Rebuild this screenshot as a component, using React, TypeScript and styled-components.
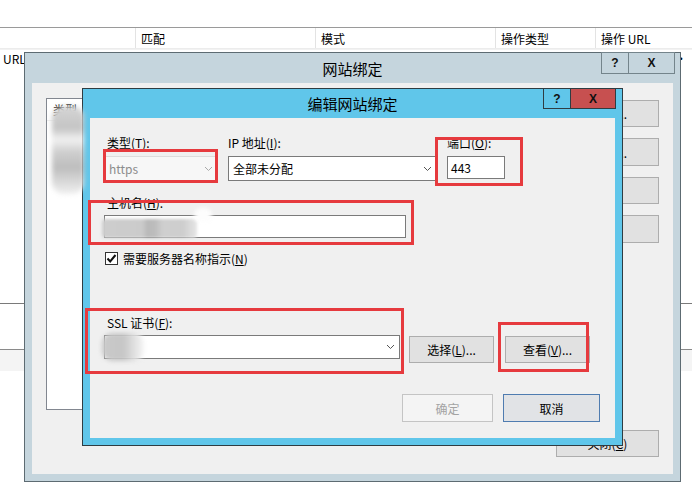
import React from 'react'
import styled, { createGlobalStyle, css } from 'styled-components'

const GlobalStyle = createGlobalStyle`
  html, body {
    margin: 0;
    padding: 0;
    background: #fff;
  }
  body {
    width: 692px;
    height: 488px;
    overflow: hidden;
    font-family: "Noto Sans CJK SC", "Noto Sans", sans-serif;
    font-size: 12px;
    color: #000;
  }
  u {
    text-decoration-thickness: 1px;
    text-underline-offset: 1px;
  }
`

const Screen = styled.div`
  position: relative;
  width: 692px;
  height: 488px;
  overflow: hidden;
  background: #fff;
`

/* the IIS list behind the dialogs */
const BackList = styled.div`
  padding-top: 27px;
`
const HeaderRow = styled.div`
  display: grid;
  grid-template-columns: 135px 180px 180px 100px 1fr;
  height: 20px;
  border-top: 1px solid #9a9a9a;
  border-bottom: 1px solid #ececec;
`
const HeaderCell = styled.div`
  display: flex;
  align-items: center;
  padding-left: 5px;
  border-left: 1px solid #e3e3e3;
  white-space: nowrap;
  &:first-child {
    border-left: none;
  }
`
const DataRow = styled.div`
  height: 16px;
  display: flex;
  align-items: center;
  justify-content: space-between;
  padding: 0 5px 0 3px;
  border-top: 1px solid #f2f2f2;
`
const GroupBlock = styled.div`
  margin-top: 237px;
  height: 45px;
  border-top: 1px solid #7a7a7a;
  border-bottom: 1px solid #8a8a8a;
`
const Band = styled.div`
  height: 21px;
  background: #f4f4f4;
`

/* window chrome */
const Win = styled.div<{ $x: number; $y: number; $w: number; $h: number; $frame: string; $edge: string }>`
  position: absolute;
  left: ${p => p.$x}px;
  top: ${p => p.$y}px;
  width: ${p => p.$w}px;
  height: ${p => p.$h}px;
  box-sizing: border-box;
  border: 1px solid ${p => p.$edge};
  background: ${p => p.$frame};
  display: flex;
  flex-direction: column;
`
const TitleBar = styled.div<{ $h: number }>`
  height: ${p => p.$h}px;
  flex-shrink: 0;
  display: grid;
  grid-template-columns: 1fr auto 1fr;
  align-items: center;
`
const Title = styled.div`
  grid-column: 2;
  font-size: 15px;
  color: #000;
  white-space: nowrap;
`
const Captions = styled.div<{ $inset: number }>`
  grid-column: 3;
  justify-self: end;
  align-self: start;
  display: flex;
  margin-top: -1px;
  margin-right: ${p => p.$inset}px;
`
const CaptionBtn = styled.div<{ $w: number; $h: number; $bg: string; $edge: string }>`
  box-sizing: border-box;
  width: ${p => p.$w}px;
  height: ${p => p.$h}px;
  background: ${p => p.$bg};
  border: 1px solid ${p => p.$edge};
  display: flex;
  align-items: center;
  justify-content: center;
  font: bold 12px "Liberation Sans", Arial, sans-serif;
  color: #111;
  & + & {
    border-left: none;
  }
`
const Client = styled.div`
  flex: 1;
  margin: 0 7px 7px;
  background: #f0f0f0;
  display: flex;
  flex-direction: column;
`

/* buttons */
const Btn = styled.button<{ $w: number; $h: number; $variant?: 'primary' | 'disabled' }>`
  box-sizing: border-box;
  width: ${p => p.$w}px;
  height: ${p => p.$h}px;
  flex-shrink: 0;
  padding: 0;
  font-family: inherit;
  font-size: 12px;
  color: #000;
  background: #e1e1e1;
  border: 1px solid #adadad;
  display: flex;
  align-items: center;
  justify-content: center;
  white-space: nowrap;
  ${p =>
    p.$variant === 'primary' &&
    css`
      border-color: #4f7cb0;
      background: #e1e3e6;
    `}
  ${p =>
    p.$variant === 'disabled' &&
    css`
      border-color: #c4c4c4;
      background: #f4f4f4;
      color: #a3a3a3;
    `}
`

/* outer dialog body */
const BindingsBody = styled.div`
  flex: 1;
  display: flex;
  flex-direction: column;
  padding: 15px 14px 17px;
`
const BindingsMain = styled.div`
  height: 312px;
  display: grid;
  grid-template-columns: 1fr 113px;
  column-gap: 13px;
`
const BindingList = styled.div`
  background: #fff;
  border: 1px solid #828790;
`
const ListHeader = styled.div`
  height: 21px;
  display: flex;
  align-items: center;
  padding-left: 6px;
  border-bottom: 1px solid #f0f0f0;
`
const SideButtons = styled.div`
  display: flex;
  flex-direction: column;
  gap: 11px;
  padding-top: 2px;
`
const FooterRow = styled.div`
  margin-top: 20px;
  display: flex;
  justify-content: flex-end;
`

/* edit dialog form */
const Form = styled.div`
  flex: 1;
  display: flex;
  flex-direction: column;
  padding: 17px 15px 16px 14px;
`
const TopGrid = styled.div`
  display: grid;
  grid-template-columns: 114px 209px 58px;
  column-gap: 10px;
  align-items: start;
`
const Field = styled.div<{ $gap?: number }>`
  display: flex;
  flex-direction: column;
  gap: ${p => p.$gap ?? 5}px;
`
const Section = styled(Field)<{ $top: number }>`
  margin-top: ${p => p.$top}px;
`
const Label = styled.div<{ $indent?: number }>`
  height: 16px;
  line-height: 16px;
  padding-left: ${p => p.$indent ?? 0}px;
  white-space: nowrap;
`
const Combo = styled.div<{ $w?: number; $h: number; $disabled?: boolean }>`
  box-sizing: border-box;
  width: ${p => (p.$w ? `${p.$w}px` : '100%')};
  height: ${p => p.$h}px;
  display: flex;
  align-items: center;
  justify-content: space-between;
  padding: 0 4px 0 4px;
  background: ${p => (p.$disabled ? '#f7f7f7' : '#fff')};
  border: 1px solid ${p => (p.$disabled ? '#dcdcdc' : '#7a7a7a')};
  color: ${p => (p.$disabled ? '#8c8c8c' : '#000')};
  flex-shrink: 0;
`
const TextBox = styled.div<{ $w?: number; $h: number }>`
  box-sizing: border-box;
  width: ${p => (p.$w ? `${p.$w}px` : '100%')};
  height: ${p => p.$h}px;
  display: flex;
  align-items: center;
  padding-left: 3px;
  background: #fff;
  border: 1px solid #7a7a7a;
`
const CheckRow = styled.div`
  margin-top: 12px;
  height: 16px;
  display: flex;
  align-items: center;
  gap: 5px;
  padding-left: 1px;
  white-space: nowrap;
`
const CheckBox = styled.div`
  box-sizing: border-box;
  width: 13px;
  height: 13px;
  background: #fff;
  border: 1px solid #333;
  display: flex;
  align-items: center;
  justify-content: center;
`
const CertRow = styled.div`
  display: flex;
  align-items: flex-start;
  gap: 9px;
  & > button {
    margin-top: 1px;
  }
  & > button + button {
    margin-left: 2px;
  }
`
const Actions = styled.div`
  margin-top: 31px;
  display: flex;
  justify-content: flex-end;
  gap: 10px;
`

/* annotations drawn over the screenshot */
const Mark = styled.div<{ $x: number; $y: number; $w: number; $h: number }>`
  position: absolute;
  left: ${p => p.$x}px;
  top: ${p => p.$y}px;
  width: ${p => p.$w}px;
  height: ${p => p.$h}px;
  box-sizing: border-box;
  border: 3px solid #e63a3e;
  pointer-events: none;
`
const Smudge = styled.div<{ $x: number; $y: number; $w: number; $h: number; $fill: string; $blur: number; $round?: number }>`
  position: absolute;
  left: ${p => p.$x}px;
  top: ${p => p.$y}px;
  width: ${p => p.$w}px;
  height: ${p => p.$h}px;
  background: ${p => p.$fill};
  filter: blur(${p => p.$blur}px);
  border-radius: ${p => p.$round ?? 4}px;
  pointer-events: none;
`

const Chevron = ({ color = '#555' }: { color?: string }) => (
  <svg width="9" height="6" viewBox="0 0 9 6">
    <polyline points="1,1 4.5,4.5 8,1" fill="none" stroke={color} strokeWidth="1" />
  </svg>
)

const Tick = () => (
  <svg width="11" height="11" viewBox="0 0 11 11">
    <polyline points="1.5,5.5 4.2,8.5 9.5,2" fill="none" stroke="#111" strokeWidth="2" />
  </svg>
)

const OUTER_FRAME = '#c5d5dd'
const OUTER_EDGE = '#5d6b72'
const INNER_FRAME = '#60c6ea'
const INNER_EDGE = '#2f3c42'

export default function App() {
  return (
    <>
      <GlobalStyle />
      <Screen>
        <BackList>
          <HeaderRow>
            <HeaderCell />
            <HeaderCell>匹配</HeaderCell>
            <HeaderCell>模式</HeaderCell>
            <HeaderCell>操作类型</HeaderCell>
            <HeaderCell>操作 URL</HeaderCell>
          </HeaderRow>
          <DataRow>
            <span>URL</span>
            <span>·</span>
          </DataRow>
          <GroupBlock />
          <Band />
        </BackList>

        <Win $x={24} $y={52} $w={657} $h={430} $frame={OUTER_FRAME} $edge={OUTER_EDGE}>
          <TitleBar $h={30}>
            <Title>网站绑定</Title>
            <Captions $inset={5}>
              <CaptionBtn $w={28} $h={22} $bg={OUTER_FRAME} $edge="#74848b">?</CaptionBtn>
              <CaptionBtn $w={46} $h={22} $bg={OUTER_FRAME} $edge="#74848b">X</CaptionBtn>
            </Captions>
          </TitleBar>
          <Client>
            <BindingsBody>
              <BindingsMain>
                <BindingList>
                  <ListHeader>类型</ListHeader>
                </BindingList>
                <SideButtons>
                  <Btn $w={113} $h={27}>添加(<u>A</u>)...</Btn>
                  <Btn $w={113} $h={28}>编辑(<u>E</u>)...</Btn>
                  <Btn $w={113} $h={27}>删除(<u>R</u>)</Btn>
                  <Btn $w={113} $h={28}>浏览(<u>B</u>)</Btn>
                </SideButtons>
              </BindingsMain>
              <FooterRow>
                <Btn $w={103} $h={27}>关闭(<u>C</u>)</Btn>
              </FooterRow>
            </BindingsBody>
          </Client>
        </Win>

        <Win $x={82} $y={88} $w={541} $h={358} $frame={INNER_FRAME} $edge={INNER_EDGE}>
          <TitleBar $h={29}>
            <Title>编辑网站绑定</Title>
            <Captions $inset={6}>
              <CaptionBtn $w={28} $h={21} $bg={INNER_FRAME} $edge={INNER_EDGE}>?</CaptionBtn>
              <CaptionBtn $w={45} $h={21} $bg="#c75050" $edge={INNER_EDGE}>X</CaptionBtn>
            </Captions>
          </TitleBar>
          <Client>
            <Form>
              <TopGrid>
                <Field>
                  <Label $indent={3}>类型(<u>T</u>):</Label>
                  <Combo $h={25} $disabled>
                    https
                    <Chevron color="#aaa" />
                  </Combo>
                </Field>
                <Field>
                  <Label>IP 地址(<u>I</u>):</Label>
                  <Combo $h={25}>
                    全部未分配
                    <Chevron />
                  </Combo>
                </Field>
                <Field>
                  <Label>端口(<u>O</u>):</Label>
                  <TextBox $h={23}>443</TextBox>
                </Field>
              </TopGrid>

              <Section $top={14} $gap={4}>
                <Label $indent={3}>主机名(<u>H</u>):</Label>
                <TextBox $w={302} $h={23} />
              </Section>

              <CheckRow>
                <CheckBox>
                  <Tick />
                </CheckBox>
                <span>
                  需要服务器名称指示(<u>N</u>)
                </span>
              </CheckRow>

              <Section $top={49} $gap={4}>
                <Label $indent={3}>SSL 证书(<u>F</u>):</Label>
                <CertRow>
                  <Combo $w={296} $h={24}>
                    <span />
                    <Chevron />
                  </Combo>
                  <Btn $w={85} $h={27}>选择(<u>L</u>)...</Btn>
                  <Btn $w={85} $h={27}>查看(<u>V</u>)...</Btn>
                </CertRow>
              </Section>

              <Actions>
                <Btn $w={91} $h={28} $variant="disabled">确定</Btn>
                <Btn $w={97} $h={28} $variant="primary">取消</Btn>
              </Actions>
            </Form>
          </Client>
        </Win>

        {/* privacy blurs */}
        <Smudge
          $x={52}
          $y={106}
          $w={32}
          $h={88}
          $blur={2.5}
          $round={12}
          $fill="linear-gradient(to bottom, #d6d6d6 0%, #c4c4c4 25%, #f2f2f2 38%, #cfcfcf 52%, #bdbdbd 70%, #d2d2d2 82%, #f0f0f0 100%)"
        />
        <Smudge
          $x={102}
          $y={219}
          $w={95}
          $h={19}
          $blur={1.5}
          $fill="linear-gradient(to right, #cdcdcd 0%, #cbcbcb 42%, #b9b9b9 48%, #bdbdbd 56%, #cfcfcf 64%, #cdcdcd 85%, #e6e6e6 100%)"
        />
        <Smudge $x={194} $y={208} $w={18} $h={14} $blur={2} $round={8} $fill="#fdfdfd" />
        <Smudge
          $x={102}
          $y={333}
          $w={42}
          $h={28}
          $blur={2}
          $round={10}
          $fill="linear-gradient(to right, #cacaca 0%, #c6c6c6 50%, #dedede 75%, #f6f6f6 100%)"
        />

        {/* red annotation boxes */}
        <Mark $x={103} $y={149} $w={115} $h={34} />
        <Mark $x={435} $y={137} $w={88} $h={49} />
        <Mark $x={88} $y={200} $w={326} $h={45} />
        <Mark $x={85} $y={308} $w={319} $h={66} />
        <Mark $x={498} $y={322} $w={91} $h={50} />
      </Screen>
    </>
  )
}
